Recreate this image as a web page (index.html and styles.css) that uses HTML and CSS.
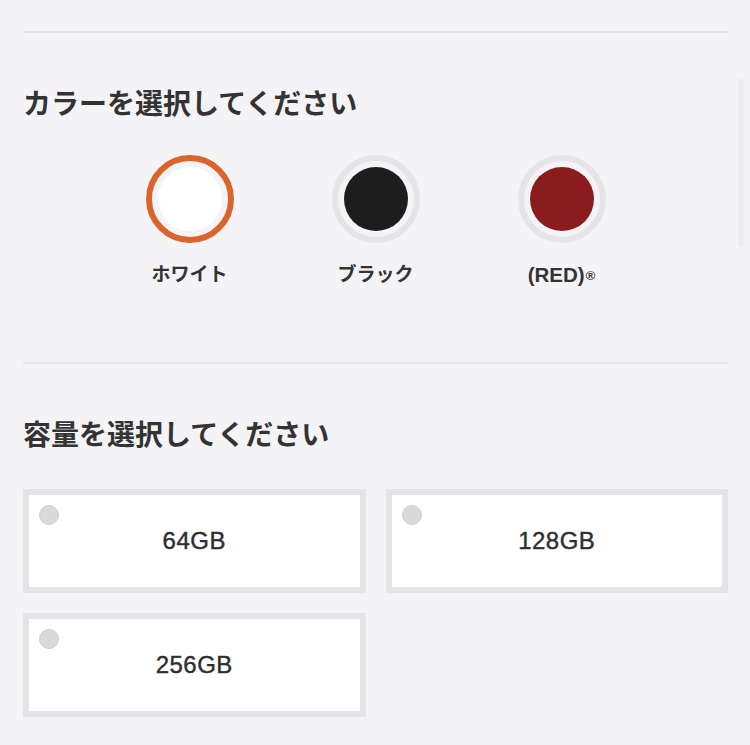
FILE: index.html
```html
<!DOCTYPE html>
<html lang="ja">
<head>
  <meta charset="UTF-8">
  <title>モデルを選択</title>
  <meta name="viewport" content="width=device-width, initial-scale=1.0">
  <link rel="stylesheet" href="styles.css">
</head>
<body>
  <div class="page">
    <section class="section section-color">
      <h2 class="section-title">カラーを選択してください</h2>
      <div class="swatches">
        <div class="swatch selected">
          <div class="swatch-ring"><div class="swatch-color white"></div></div>
          <div class="swatch-name">ホワイト</div>
        </div>
        <div class="swatch">
          <div class="swatch-ring"><div class="swatch-color black"></div></div>
          <div class="swatch-name">ブラック</div>
        </div>
        <div class="swatch">
          <div class="swatch-ring"><div class="swatch-color red"></div></div>
          <div class="swatch-name latin">(RED)<sup class="mark">®</sup></div>
        </div>
      </div>
    </section>

    <section class="section">
      <h2 class="section-title">容量を選択してください</h2>
      <div class="options">
        <label class="option"><span class="radio"></span>64GB</label>
        <label class="option"><span class="radio"></span>128GB</label>
        <label class="option"><span class="radio"></span>256GB</label>
      </div>
    </section>
  </div>
  <div class="scroll-thumb"></div>
</body>
</html>
```

FILE: styles.css
```css
html, body {
  margin: 0;
  padding: 0;
  background: #f4f4f6;
  color: #333;
  font-family: "Liberation Sans", "Noto Sans CJK JP", sans-serif;
}

.page {
  padding: 31px 22px 40px 23px;
}

.section {
  border-top: 2px solid #e3e3e5;
}

.section-title {
  margin: 0;
  padding-top: 52px;
  font-size: 28px;
  line-height: 40px;
  font-weight: bold;
  color: #333;
}

.section-color {
  padding-bottom: 74px;
}

.swatches {
  display: flex;
  justify-content: center;
  margin-top: 30px;
}

.swatch {
  width: 186px;
  display: flex;
  flex-direction: column;
  align-items: center;
}

.swatch-ring {
  width: 88px;
  height: 88px;
  box-sizing: border-box;
  border: 6px solid #e5e5e7;
  border-radius: 50%;
  padding: 6px;
}

.swatch.selected .swatch-ring {
  border-color: #d9652c;
}

.swatch-color {
  width: 64px;
  height: 64px;
  border-radius: 50%;
}

.white { background: #ffffff; }
.black { background: #1d1d1d; }
.red { background: #8a1c1e; }

.swatch-name {
  height: 26px;
  margin-top: 19px;
  font-size: 19px;
  line-height: 26px;
  font-weight: bold;
}

.swatch-name.latin {
  font-size: 20.5px;
}

.mark {
  font-size: 13px;
  line-height: 0;
  vertical-align: 2px;
  margin-left: 1px;
}

.options {
  display: grid;
  grid-template-columns: 1fr 1fr;
  gap: 20px;
  margin-top: 33px;
}

.option {
  position: relative;
  height: 104px;
  box-sizing: border-box;
  border: 6px solid #e4e4e6;
  background: #fff;
  display: flex;
  align-items: center;
  justify-content: center;
  font-size: 24px;
  letter-spacing: 0.5px;
  color: #2e2e2e;
  -webkit-text-stroke: 0.4px #2e2e2e;
}

.radio {
  position: absolute;
  left: 10px;
  top: 10px;
  width: 20px;
  height: 20px;
  box-sizing: border-box;
  border-radius: 50%;
  background: #dadada;
  border: 1px solid #cfcfcf;
}

.scroll-thumb {
  position: fixed;
  left: 738px;
  top: 78px;
  width: 6px;
  height: 169px;
  border-radius: 3px;
  background: #ededef;
}
```
